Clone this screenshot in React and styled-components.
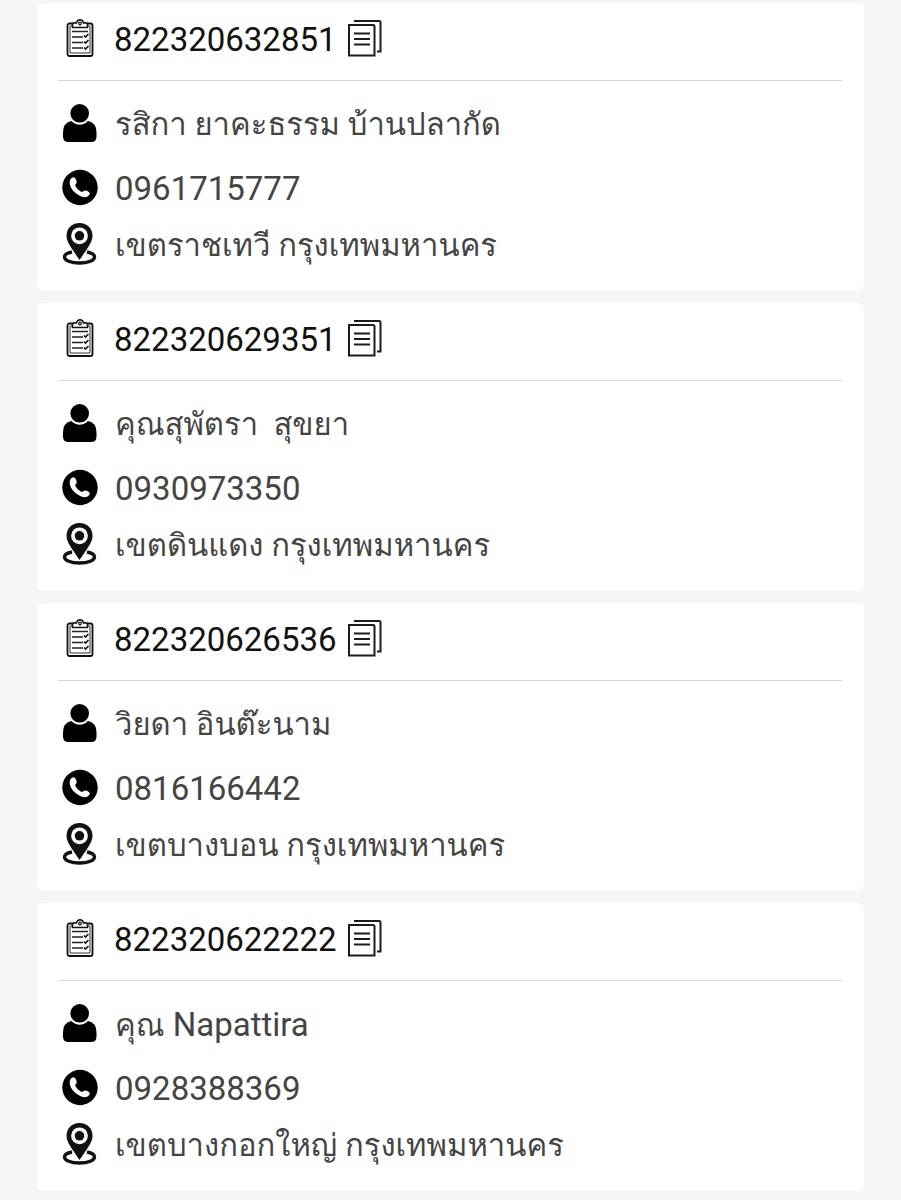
import React from 'react';
import styled, { createGlobalStyle } from 'styled-components';

const parcels = [
    {
        trackingNo: '822320632851',
        receiver: 'รสิกา ยาคะธรรม บ้านปลากัด',
        phone: '0961715777',
        address: 'เขตราชเทวี กรุงเทพมหานคร',
    },
    {
        trackingNo: '822320629351',
        receiver: 'คุณสุพัตรา  สุขยา',
        phone: '0930973350',
        address: 'เขตดินแดง กรุงเทพมหานคร',
    },
    {
        trackingNo: '822320626536',
        receiver: 'วิยดา อินต๊ะนาม',
        phone: '0816166442',
        address: 'เขตบางบอน กรุงเทพมหานคร',
    },
    {
        trackingNo: '822320622222',
        receiver: 'คุณ Napattira',
        phone: '0928388369',
        address: 'เขตบางกอกใหญ่ กรุงเทพมหานคร',
    },
];

const ClipboardIcon = () => (
    <Icon viewBox="0 0 36 44" aria-hidden="true">
        <rect x="5.5" y="6.5" width="25" height="32.5" rx="2" fill="#fff" stroke="#111" strokeWidth="1.8" />
        <path d="M8 9h20v27H8z" fill="#fff" stroke="#333" strokeWidth="1" />
        <path
            d="M10.5 10.5v-3q0-1.5 1.5-1.5h2.5q.5-3.3 3.5-3.3t3.5 3.3H24q1.5 0 1.5 1.5v3z"
            fill="#fff"
            stroke="#111"
            strokeWidth="1.5"
        />
        <circle cx="18" cy="6.5" r="1.3" fill="none" stroke="#111" strokeWidth="1.2" />
        <path d="M10 14.5h16M10 20h11M10 25.500h11M10 31h11" stroke="#222" strokeWidth="1.3" />
        <path
            d="M22 18.500l1.500 1.500 3-3M22 24.500l1.500 1.500 3-3M22 30.500l1.500 1.500 3-3"
            fill="none"
            stroke="#111"
            strokeWidth="1.6"
        />
    </Icon>
);

const CopyIcon = () => (
    <Icon viewBox="0 0 36 44" aria-hidden="true">
        <path
            d="M8 4h25q1.500 0 1.500 1.500v29H31M3 8h24q1.500 0 1.500 1.500v29H3z"
            fill="none"
            stroke="#1c1c1c"
            strokeWidth="2"
        />
        <path d="M8 16.500h16M8 22h16M8 27.500h16" stroke="#1c1c1c" strokeWidth="2" />
    </Icon>
);

const UserIcon = () => (
    <Icon viewBox="0 0 36 44" aria-hidden="true">
        <circle cx="17.7" cy="12.3" r="9.3" />
        <path d="M9.500 20q3.600 3.800 8.200 3.800t8.200-3.800q8.600 1.600 8.600 11.500v4q0 5.500-5.500 5.500H6.500q-5.500 0-5.500-5.500v-4Q1 21.600 9.500 20z" />
    </Icon>
);

const PhoneIcon = () => (
    <Icon viewBox="0 0 36 44" aria-hidden="true">
        <circle cx="18" cy="22.5" r="17.7" />
        <path
            d="M8.300 14.500q1.500-2.500 3.500-2.300 1.600.3 2.600 3.200.8 2.300-.6 3.500-1 .9-.3 2.300 1.800 3.600 5.200 5.400 1.500.8 2.500-.3 1.400-1.400 3.600-.6 2.900 1 3 2.600.1 2-2.300 3.300-3.300 1.900-8.700-1.400Q8.500 25.300 7.700 18.500q-.2-2.500.6-4z"
            fill="#fff"
        />
    </Icon>
);

const PinIcon = () => (
    <Icon viewBox="0 0 36 44" aria-hidden="true">
        <path
            d="M10 30C4.800 31 2.500 32.700 2.500 35c0 3.400 6.300 6 15 6s15-2.600 15-6c0-2.300-2.300-4-7.500-5"
            fill="none"
            stroke="#111"
            strokeWidth="3.4"
        />
        <path d="M17.500 1C9.700 1 4.500 6.500 4.500 14c0 4.500 2.700 8.700 5.500 13l7.500 11 7.500-11c2.800-4.300 5.500-8.500 5.500-13 0-7.500-5.200-13-13-13z" fill="#111" />
        <circle cx="17.5" cy="13.8" r="8.4" fill="#fff" />
        <circle cx="17.5" cy="13.8" r="4.8" fill="#111" />
    </Icon>
);

// Latin names are set a little larger so that they line up with the digits
const renderName = (name) => name
    .split(/(\s*[A-Za-z]+)/)
    .map((part) => (/[A-Za-z]/.test(part) ? <Latin key={part}>{part}</Latin> : part));

const ParcelCard = ({
    trackingNo, receiver, phone, address,
}) => (
    <Card>
        <CardHeader>
            <ClipboardIcon />
            <TrackingNo>{trackingNo}</TrackingNo>
            <CopyButton
                type="button"
                aria-label={`Copy ${trackingNo}`}
                onClick={() => navigator.clipboard?.writeText(trackingNo)}
            >
                <CopyIcon />
            </CopyButton>
        </CardHeader>
        <Row>
            <UserIcon />
            <Text>{renderName(receiver)}</Text>
        </Row>
        <Row>
            <PhoneIcon />
            <PhoneLink href={`tel:${phone}`}>{phone}</PhoneLink>
        </Row>
        <Row $compact>
            <PinIcon />
            <Text>{address}</Text>
        </Row>
    </Card>
);

export default function App() {
    return (
        <>
            <GlobalStyle />
            <List lang="th">
                {parcels.map((parcel) => (
                    <ParcelCard key={parcel.trackingNo} {...parcel} />
                ))}
            </List>
        </>
    );
}

const GlobalStyle = createGlobalStyle`
    * {
        box-sizing: border-box;
    }
    body {
        margin: 0;
        background: #f5f5f5;
        color: #444;
        font-family: Roboto, Loma, 'Noto Sans', sans-serif;
        font-size: 33px;
        line-height: 44px;
    }
`;

const List = styled.main`
    display: flex;
    flex-direction: column;
    gap: 12px;
    padding: 3px 37px 9px;
`;

const Card = styled.article`
    padding: 0 21px 22px;
    border-radius: 6px;
    background: #fff;
`;

const CardHeader = styled.header`
    display: flex;
    align-items: center;
    padding: 13px 4px 18px;
    margin-bottom: 10px;
    border-bottom: 1px solid #d8d8d8;
`;

const Row = styled.div`
    display: flex;
    align-items: center;
    gap: 17px;
    height: ${({ $compact }) => ($compact ? '50px' : '64px')};
    padding: 0 4px;
`;

const Icon = styled.svg`
    display: block;
    flex: none;
    width: 36px;
    height: 44px;
`;

const TrackingNo = styled.h2`
    margin: 0 9px 0 16px;
    padding-top: 2px;
    color: #111;
    font-size: 33px;
    font-weight: 400;
`;

const CopyButton = styled.button`
    padding: 0;
    border: 0;
    background: none;
    cursor: pointer;
`;

const Text = styled.span`
    padding-top: 4px;
    font-size: 31px;
    white-space: pre-wrap;
`;

const Latin = styled.span`
    font-size: 33px;
`;

const PhoneLink = styled.a`
    padding-top: 4px;
    color: inherit;
    text-decoration: none;
`;
